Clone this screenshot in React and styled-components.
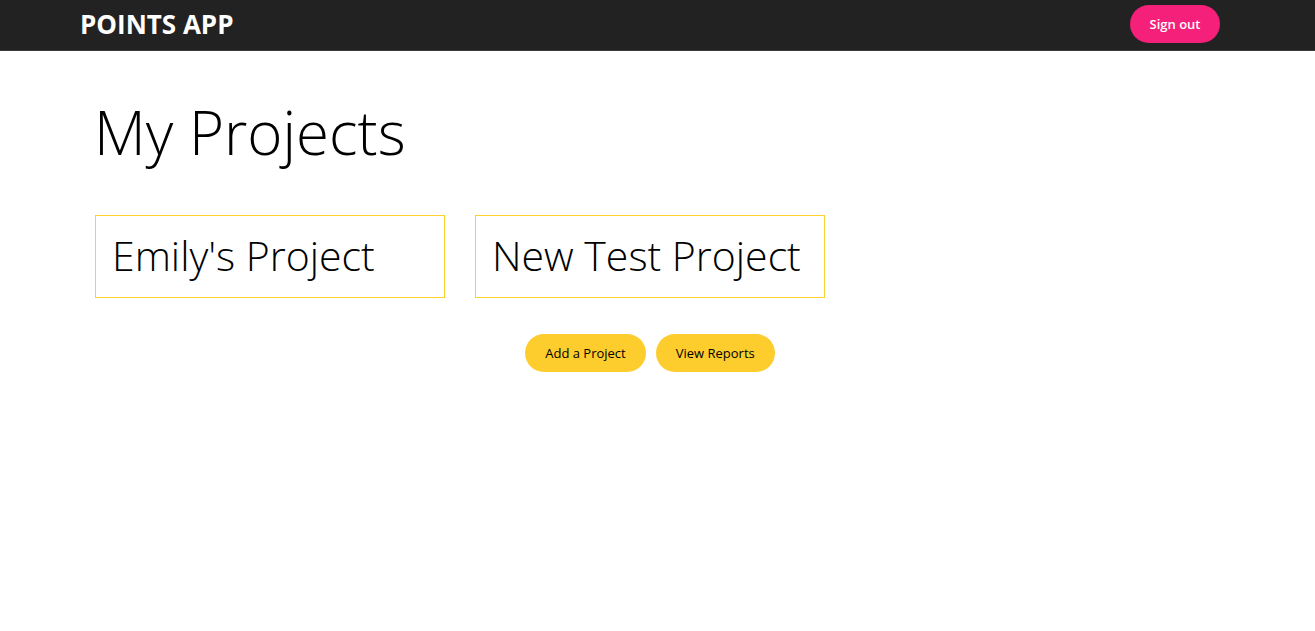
import React from "react";
import styled, { createGlobalStyle } from "styled-components";

const Global = createGlobalStyle`
  html, body { margin: 0; padding: 0; background: #fff; }
  body { font-family: "Open Sans", "Liberation Sans", sans-serif; color: #000; }
  * { box-sizing: border-box; }
`;

const NavBar = styled.header`
  background: #222222;
  height: 51px;
  border-bottom: 1px solid #3a3a3a;
`;

const Container = styled.div`
  width: 1140px;
  margin-left: max(0px, calc((100% - 1155px) / 2));
`;

const NavInner = styled(Container)`
  height: 50px;
  display: flex;
  align-items: center;
  justify-content: space-between;
`;

const Brand = styled.div`
  color: #fff;
  font-weight: 700;
  font-size: 26px;
  line-height: 1;
  margin-top: -3px;
`;

const Pill = styled.button`
  border: none;
  border-radius: 19px;
  height: 38px;
  padding: 0 ${(p) => p.$px || 20}px;
  margin-top: ${(p) => (p.$pink ? "-2px" : "0")};
  font-family: "Open Sans", "Liberation Sans", sans-serif;
  font-size: 13px;
  font-weight: ${(p) => (p.$pink ? 600 : 400)};
  background: ${(p) => (p.$pink ? "#f5207a" : "#fdcd2e")};
  color: ${(p) => (p.$pink ? "#fff" : "#000")};
  cursor: pointer;
`;

const Main = styled(Container)`
  padding: 0 15px;
`;

const Title = styled.h1`
  font-weight: 300;
  font-size: 60px;
  line-height: 1;
  margin: 0;
  padding-top: 51px;
  padding-bottom: 53px;
  margin-left: -1px;
`;

const Cards = styled.div`
  display: flex;
  gap: 30px;
`;

const Card = styled.div`
  width: 350px;
  height: 83px;
  border: 1px solid #fcd02f;
  display: flex;
  align-items: center;
  padding: 0 16px 3px;
  font-weight: 300;
  font-size: 41px;
`;

const Actions = styled.div`
  display: flex;
  justify-content: center;
  gap: 10px;
  margin-top: 36px;
`;

export default function App() {
  return (
    <>
      <Global />
      <NavBar>
        <NavInner>
          <Brand>POINTS APP</Brand>
          <Pill $pink $px={19.5}>Sign out</Pill>
        </NavInner>
      </NavBar>
      <Main>
        <Title>My Projects</Title>
        <Cards>
          <Card>Emily's Project</Card>
          <Card>New Test Project</Card>
        </Cards>
        <Actions>
          <Pill>Add a Project</Pill>
          <Pill>View Reports</Pill>
        </Actions>
      </Main>
    </>
  );
}
